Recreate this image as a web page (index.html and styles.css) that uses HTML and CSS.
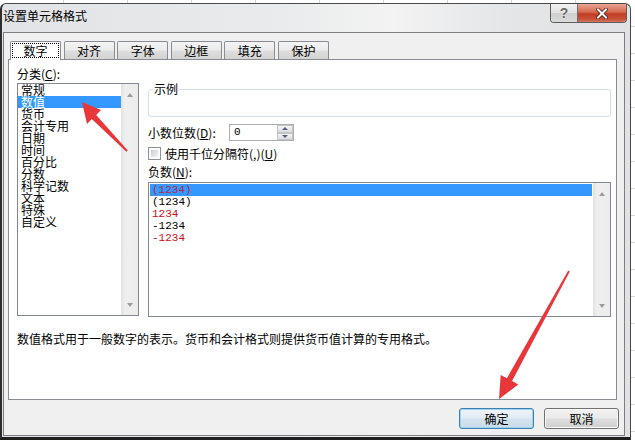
FILE: index.html
```html
<!DOCTYPE html>
<html lang="zh-CN">
  <head>
    <meta charset="UTF-8" />
    <meta name="viewport" content="width=device-width, initial-scale=1" />
    <title>设置单元格格式</title>
    <link rel="stylesheet" href="styles.css">
  </head>
  <body>
    <div class="window">
      <!-- Title bar -->
      <div class="titlebar">
        <span class="title">设置单元格格式</span>
        <div class="caption-buttons">
          <span class="cap-btn help">?</span>
          <span class="cap-btn close">
            <svg width="12" height="11" viewBox="0 0 12 11">
              <path d="M2 1.5 L10 9.5 M10 1.5 L2 9.5" stroke="#4a1a12" stroke-width="3.6" stroke-linecap="square" />
              <path d="M2 1.5 L10 9.5 M10 1.5 L2 9.5" stroke="#fff" stroke-width="2" stroke-linecap="square" />
            </svg>
          </span>
        </div>
      </div>

      <div class="client">
        <!-- Tabs -->
        <div class="tabs">
          <div class="tab active"><span class="focus">数字</span></div>
          <div class="tab">对齐</div>
          <div class="tab">字体</div>
          <div class="tab">边框</div>
          <div class="tab">填充</div>
          <div class="tab">保护</div>
        </div>

        <div class="panel">
          <div class="panel-main">
            <div class="category">
              <div class="label">分类(<u>C</u>):</div>
              <div class="listbox cat-list">
                <ul class="items">
                  <li>常规</li>
                  <li class="selected">数值</li>
                  <li>货币</li>
                  <li>会计专用</li>
                  <li>日期</li>
                  <li>时间</li>
                  <li>百分比</li>
                  <li>分数</li>
                  <li>科学记数</li>
                  <li>文本</li>
                  <li>特殊</li>
                  <li>自定义</li>
                </ul>
                <div class="scrollbar">
                  <span class="arrow up"></span>
                  <span class="arrow down"></span>
                </div>
              </div>
            </div>

            <div class="options">
              <div class="sample">
                <span class="legend">示例</span>
              </div>

              <div class="decimals">
                <span class="decimals-label">小数位数(<u>D</u>):</span>
                <div class="spin">
                  <span class="spin-value">0</span>
                  <div class="spin-buttons">
                    <span class="spin-btn"><span class="arrow up small"></span></span>
                    <span class="spin-btn"><span class="arrow down small"></span></span>
                  </div>
                </div>
              </div>

              <div class="check">
                <span class="checkbox"></span>
                <span>使用千位分隔符(,)(<u>U</u>)</span>
              </div>

              <div class="label neg-label">负数(<u>N</u>):</div>
              <div class="listbox neg-list">
                <ul class="items nums">
                  <li class="selected red">(1234)</li>
                  <li>(1234)</li>
                  <li class="red">1234</li>
                  <li>-1234</li>
                  <li class="red">-1234</li>
                </ul>
                <div class="scrollbar">
                  <span class="arrow up"></span>
                  <span class="arrow down"></span>
                </div>
              </div>
            </div>
          </div>

          <p class="desc">数值格式用于一般数字的表示。货币和会计格式则提供货币值计算的专用格式。</p>
        </div>

        <div class="buttons">
          <button class="btn default">确定</button>
          <button class="btn">取消</button>
        </div>
      </div>
    </div>

    <!-- red guide arrows drawn over the dialog -->
    <svg class="annotations" width="635" height="440" viewBox="0 0 635 440">
      <polygon points="82,102 101,110 96.2,114.9 127.8,150.4 126.4,151.8 91.8,119.1 87,124" fill="#e8363a" />
      <polygon points="499,399 500.7,374.9 506.9,378.3 568.2,270.4 569.8,271.4 512.1,381.1 518.3,384.5" fill="#e8363a" />
    </svg>
  </body>
</html>
```

FILE: styles.css
```css
body {
  margin: 0;
  width: 635px;
  height: 440px;
  overflow: hidden;
  position: relative;
  font-family: "Noto Sans CJK SC", "Noto Sans", sans-serif;
  font-size: 12px;
  color: #000;
  background:
    repeating-linear-gradient(to bottom, transparent 0 26px, #d6d6d6 26px 27px),
    repeating-linear-gradient(to right, transparent 0 63px, #d6d6d6 63px 64px),
    #fff;
}

u {
  text-decoration: underline;
}

/* Window frame */
.window {
  margin-top: 3px;
  width: 631px;
  height: 437px;
  box-sizing: border-box;
  border: 1px solid #4a4a4a;
  border-left: 2px solid #2e2e2e;
  border-bottom: 3px solid #1f1f1f;
  border-radius: 6px 6px 0 0;
  background: linear-gradient(to right, #e1e3e6, #eaebec 45%, #f3f3f3 62%, #e5e6e8 80%, #dfe1e4);
  display: flex;
  flex-direction: column;
}

.titlebar {
  height: 28px;
  display: flex;
  align-items: flex-start;
  flex-shrink: 0;
}

.title {
  margin-top: 5px;
  padding-left: 1px;
  line-height: 14px;
}

.caption-buttons {
  margin-left: auto;
  margin-right: 3px;
  height: 19px;
  display: flex;
  box-sizing: border-box;
  border: 1px solid #5c5c5c;
  border-top: none;
  border-radius: 0 0 4px 4px;
  overflow: hidden;
}

.cap-btn {
  display: flex;
  align-items: center;
  justify-content: center;
}

.help {
  width: 26px;
  border-right: 1px solid #6e6e6e;
  background: linear-gradient(#f3f3f3, #e2e2e2 48%, #cfcfcf 52%, #dadada);
  font-family: "Liberation Sans", sans-serif;
  font-weight: bold;
  font-size: 14px;
  color: #6a6a6a;
  text-shadow: 0 0 2px #fff;
}

.close {
  width: 48px;
  background: linear-gradient(#e7a596, #d6694f 45%, #c13d24 55%, #c85238 85%, #d47763);
}

/* Client area */
.client {
  flex: 1;
  margin: 0 5px 1px 1px;
  border: 1px solid #7d7f83;
  background: #f0f0f0;
  padding: 8px 7px 0 4px;
  display: flex;
  flex-direction: column;
}

.tabs {
  display: flex;
  gap: 2.6px;
  margin-left: 2px;
  height: 18px;
  z-index: 1;
  flex-shrink: 0;
}

.tab {
  width: 51px;
  height: 18px;
  box-sizing: border-box;
  border: 1px solid #898c95;
  border-bottom: none;
  border-radius: 2px 2px 0 0;
  background: linear-gradient(#f4f4f4, #ebebeb 48%, #dedede 52%, #d3d3d3);
  text-align: center;
  line-height: 17px;
}

.tab.active {
  height: 19px;
  background: #fff;
}

.focus {
  display: block;
  margin: 1px 1px 0;
  height: 15px;
  box-sizing: border-box;
  border: 1px dotted #000;
  line-height: 13px;
}

.panel {
  height: 341px;
  box-sizing: border-box;
  border: 1px solid #898c95;
  background: #fff;
  flex-shrink: 0;
}

.panel-main {
  display: flex;
  gap: 9px;
  padding: 7px 5px 0 8px;
}

.category {
  width: 122px;
}

.label {
  line-height: 14px;
  margin-bottom: 2px;
}

.listbox {
  box-sizing: border-box;
  border: 1px solid #828790;
  background: #fff;
  display: flex;
}

.cat-list {
  height: 233px;
}

.items {
  flex: 1;
  list-style: none;
  margin: 0;
  padding: 0;
  line-height: 12px;
}

.items li {
  height: 12px;
  padding-left: 3px;
  white-space: nowrap;
}

.items li.selected {
  background: #3399ff;
  color: #fff;
}

.scrollbar {
  width: 17px;
  box-sizing: border-box;
  background: linear-gradient(to right, #e2e2e2, #efefef 25%, #ececec);
  display: flex;
  flex-direction: column;
  justify-content: space-between;
  align-items: center;
  padding: 9px 0 8px;
}

.arrow {
  width: 0;
  height: 0;
  border-left: 3.5px solid transparent;
  border-right: 3.5px solid transparent;
}

.arrow.up {
  border-bottom: 4px solid #9c9c9c;
}

.arrow.down {
  border-top: 4px solid #9c9c9c;
}

.arrow.small {
  border-left-width: 3px;
  border-right-width: 3px;
}

.arrow.small.up {
  border-bottom: 3px solid #4d6185;
}

.arrow.small.down {
  border-top: 3px solid #4d6185;
}

/* Right column */
.options {
  flex: 1;
  display: flex;
  flex-direction: column;
}

.sample {
  position: relative;
  margin-top: 22px;
  height: 28px;
  box-sizing: border-box;
  border: 1px solid #d5dfe5;
  border-radius: 3px;
}

.legend {
  position: absolute;
  top: -8px;
  left: 4px;
  padding: 0 1px;
  background: #fff;
  line-height: 14px;
}

.decimals {
  margin-top: 7px;
  height: 17px;
  display: flex;
  align-items: center;
}

.decimals-label {
  width: 81px;
  line-height: 14px;
}

.spin {
  width: 65px;
  height: 17px;
  box-sizing: border-box;
  border: 1px solid #abadb3;
  display: flex;
  background: #fff;
}

.spin-value {
  flex: 1;
  padding-left: 4px;
  line-height: 15px;
  font-family: "Liberation Mono", monospace;
  font-size: 11px;
}

.spin-buttons {
  width: 16px;
  display: flex;
  flex-direction: column;
}

.spin-btn {
  flex: 1;
  box-sizing: border-box;
  border: 1px solid #c3c4c7;
  background: linear-gradient(#f6f6f6, #dcdcdc);
  display: flex;
  align-items: center;
  justify-content: center;
}

.check {
  margin-top: 6px;
  height: 13px;
  display: flex;
  align-items: center;
  gap: 4px;
  line-height: 13px;
}

.checkbox {
  width: 13px;
  height: 13px;
  box-sizing: border-box;
  border: 1px solid #8e8f8f;
  padding: 2px;
  background: linear-gradient(135deg, #c9cdd3, #f3f3f3) content-box, #fbfbfb;
}

.neg-label {
  margin-top: 5px;
  margin-bottom: 3px;
}

.neg-list {
  height: 135px;
}

.neg-list .items {
  padding: 1px;
}

.nums {
  font-family: "Liberation Mono", monospace;
  font-size: 11px;
}

.nums li {
  padding-left: 2px;
}

.nums li.red {
  color: #cc0b14;
}

.nums li.selected.red {
  color: #b8284a;
}

.desc {
  margin: 15px 0 0;
  padding-left: 8px;
  line-height: 14px;
}

/* Bottom buttons */
.buttons {
  display: flex;
  justify-content: flex-end;
  gap: 10px;
  margin: 8px -2px 0 0;
}

.btn {
  width: 75px;
  height: 21px;
  box-sizing: border-box;
  border: 1px solid #707070;
  border-radius: 3px;
  background: linear-gradient(#f2f2f2, #ebebeb 45%, #dddddd 55%, #cfcfcf);
  box-shadow: inset 0 0 0 1px #fbfbfb;
  font-family: "Noto Sans CJK SC", sans-serif;
  font-size: 12px;
  color: #000;
  padding: 0;
  line-height: 18px;
}

.btn.default {
  border-color: #3c7fb1;
  background: linear-gradient(#eef4f9, #e2ecf4 45%, #d3e2ee 55%, #c9dbea);
  box-shadow: inset 0 0 0 1px #9fd5f1;
}

.annotations {
  position: absolute;
  top: 0;
  left: 0;
  pointer-events: none;
}
```
